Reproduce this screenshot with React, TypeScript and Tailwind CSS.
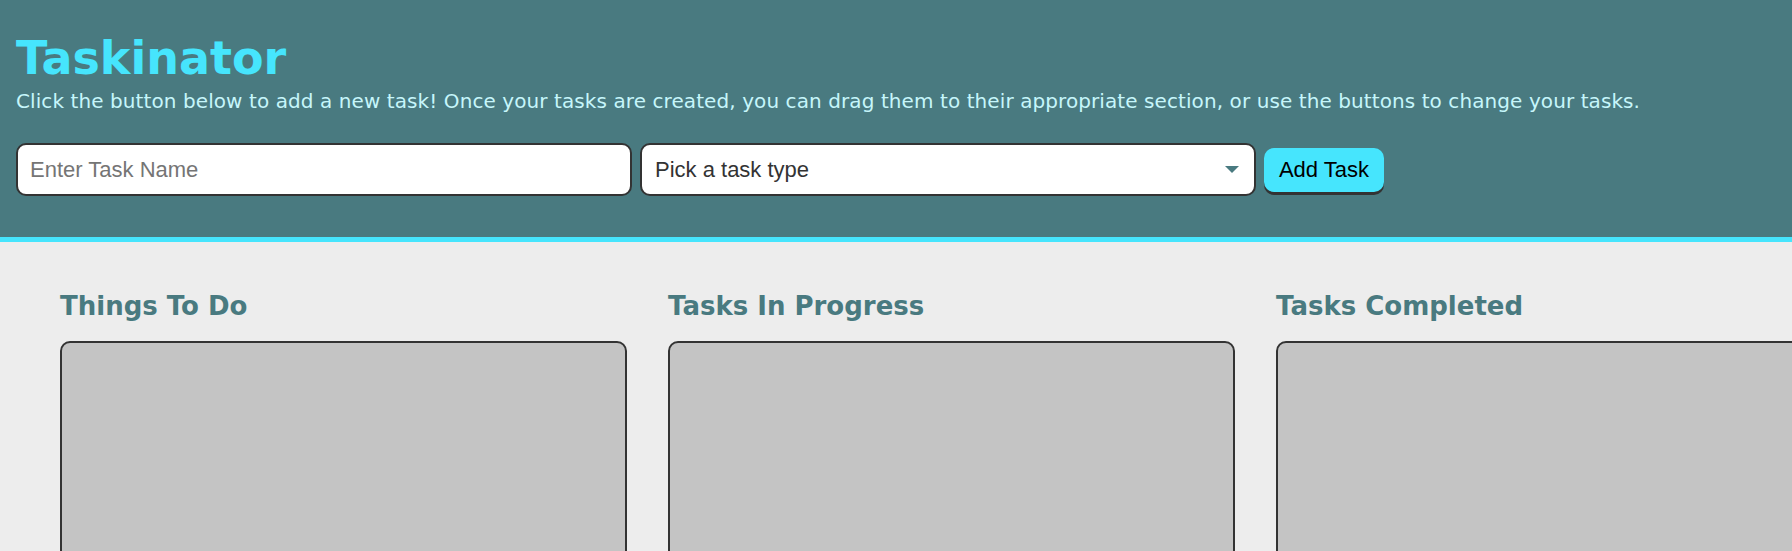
export default function App() {
	const columns = ["Things To Do", "Tasks In Progress", "Tasks Completed"];

	return (
		<div className="min-h-screen overflow-hidden bg-[#ededed] font-['DejaVu_Sans',Verdana,sans-serif]">
			<header className="border-b-[5px] border-[#46e5fd] bg-[#497a80] px-4 pb-[41px] pt-[35px]">
				<h1 className="text-[46px] font-bold leading-none text-[#46e5fd]">Taskinator</h1>
				<p className="mt-[10px] text-[20px] leading-none tracking-[0.085px] text-[#c6f6fb]">
					Click the button below to add a new task! Once your tasks are created, you can drag them to
					their appropriate section, or use the buttons to change your tasks.
				</p>
				<form className="mt-[32px] flex items-center gap-2 font-['Liberation_Sans',Arial,sans-serif]">
					<input
						type="text"
						name="task-name"
						placeholder="Enter Task Name"
						className="h-[53px] w-[616px] rounded-[10px] border-2 border-[#333] bg-white px-3 text-[22px] text-[#333] outline-none placeholder:text-[#757575]"
					/>
					<div className="relative">
						<select
							name="task-type"
							defaultValue=""
							className="h-[53px] w-[616px] appearance-none rounded-[10px] border-2 border-[#333] bg-white pl-[13px] text-[22px] text-[#333] outline-none">
							<option value="" disabled>
								Pick a task type
							</option>
							<option value="Web">Web</option>
							<option value="Mobile">Mobile</option>
							<option value="Print">Print</option>
						</select>
						<svg
							viewBox="0 0 14 7"
							className="pointer-events-none absolute right-[17px] top-[23px] h-[7px] w-[14px]">
							<path d="M0 0h14L7 7z" fill="#497a80" />
						</svg>
					</div>
					<button
						type="submit"
						className="h-[44px] w-[120px] rounded-[10px] bg-[#46e5fd] text-[22px] text-black shadow-[0_3px_0_#333]">
						Add Task
					</button>
				</form>
			</header>
			<main className="flex gap-[41px] px-[60px] pt-[51px]">
				{columns.map((title) => (
					<section key={title} className="w-[567px] shrink-0">
						<h2 className="text-[26px] font-bold leading-none text-[#497a80]">{title}</h2>
						<ul className="mt-[22px] h-[400px] rounded-[10px] border-2 border-[#333] bg-[#c4c4c4]"></ul>
					</section>
				))}
			</main>
		</div>
	);
}
